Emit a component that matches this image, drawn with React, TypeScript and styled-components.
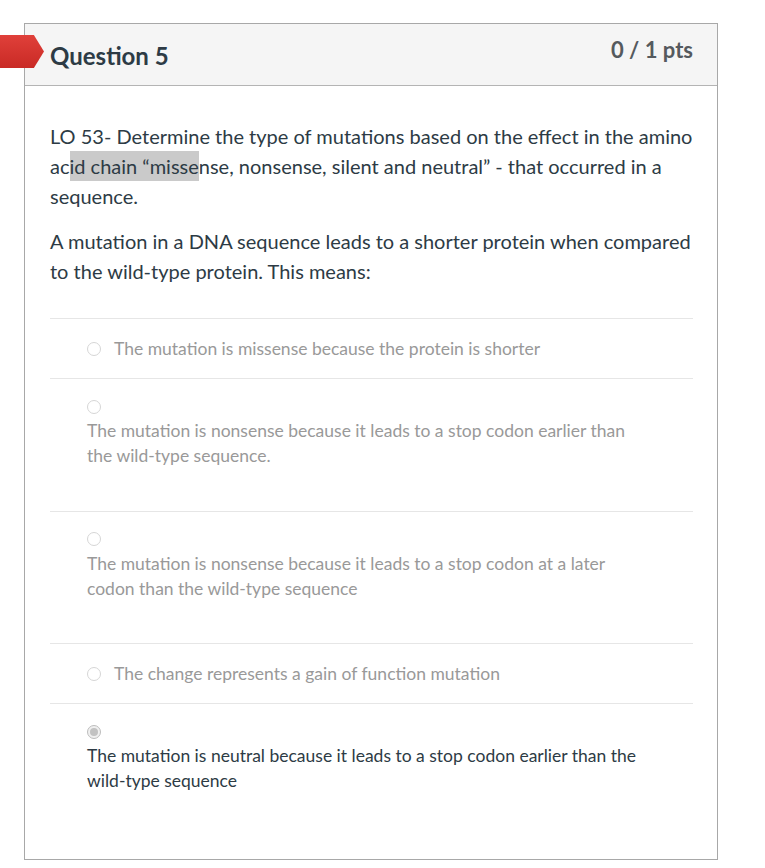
import React from "react";
import styled, {createGlobalStyle} from "styled-components";

const GlobalStyle = createGlobalStyle`
    html, body {
        margin: 0;
        padding: 0;
        background: #ffffff;
        font-family: Lato, "Open Sans", "Liberation Sans", sans-serif;
    }
`

type Answer = {
    text: string;
    wrapped?: boolean;
    selected?: boolean;
}

const answers: Answer[] = [
    {text: "The mutation is missense because the protein is shorter"},
    {text: "The mutation is nonsense because it leads to a stop codon earlier than the wild-type sequence.", wrapped: true},
    {text: "The mutation is nonsense because it leads to a stop codon at a later codon than the wild-type sequence", wrapped: true},
    {text: "The change represents a gain of function mutation"},
    {text: "The mutation is neutral because it leads to a stop codon earlier than the wild-type sequence", wrapped: true, selected: true},
]

function Radio({selected}: {selected?: boolean}) {
    return <RadioCircle $selected={selected}>{selected && <RadioDot/>}</RadioCircle>
}

export default function App() {
    return (
        <Page>
            <GlobalStyle/>
            <Card>
                <Header>
                    <Flag/>
                    <Title>Question 5</Title>
                    <Points>0 / 1 pts</Points>
                </Header>
                <Body>
                    <Paragraph>
                        LO 53- Determine the type of mutations based on the effect in the amino
                        ac<Highlight>id chain “misse</Highlight>nse, nonsense, silent and neutral” - that occurred in a
                        sequence.
                    </Paragraph>
                    <Paragraph>
                        A mutation in a DNA sequence leads to a shorter protein when compared
                        to the wild-type protein. This means:
                    </Paragraph>
                    <AnswerList>
                        {answers.map((a, i) => (
                            <AnswerRow key={i} $wrapped={a.wrapped}>
                                {a.wrapped ? (
                                    <>
                                        <RadioLine><Radio selected={a.selected}/></RadioLine>
                                        <AnswerText $selected={a.selected}>{a.text}</AnswerText>
                                    </>
                                ) : (
                                    <InlineAnswer>
                                        <Radio selected={a.selected}/>
                                        <AnswerText $selected={a.selected}>{a.text}</AnswerText>
                                    </InlineAnswer>
                                )}
                            </AnswerRow>
                        ))}
                    </AnswerList>
                </Body>
            </Card>
        </Page>
    )
}

const Page = styled.div`
    padding: 23px 0 7px 24px;
`

const Card = styled.div`
    width: 692px;
    border: 1px solid #a8a8a8;
    background: #ffffff;
`

const Header = styled.div`
    position: relative;
    display: flex;
    flex-direction: row;
    justify-content: space-between;
    align-items: flex-start;
    height: 62px;
    box-sizing: border-box;
    padding: 13px 24px 0 25px;
    background-color: #f5f5f5;
    border-bottom: 1px solid #b4b4b4;
`

const Flag = styled.div`
    position: absolute;
    left: -25px;
    top: 11px;
    width: 44px;
    height: 33px;
    background: linear-gradient(#e0403a, #c92a25);
    clip-path: polygon(0 0, 77% 0, 100% 50%, 77% 100%, 0 100%);
`

const Title = styled.div`
    margin-top: 5px;
    font-size: 24px;
    line-height: 1.2;
    font-weight: 700;
    color: #2d3b45;
`

const Points = styled.div`
    font-size: 22px;
    line-height: 1.2;
    font-weight: 700;
    color: #555a5e;
`

const Body = styled.div`
    padding: 35px 24px 24px 25px;
    color: #2d3b45;
`

const Paragraph = styled.p`
    margin: 0 0 15px;
    font-size: 20px;
    line-height: 30px;
`

const Highlight = styled.span`
    background-color: #cacaca;
    padding: 3px 0;
`

const AnswerList = styled.div`
    margin-top: 32px;
`

const AnswerRow = styled.div<{ $wrapped?: boolean }>`
    border-top: 1px solid #e6e6e6;
    padding: ${p => p.$wrapped ? "16px 45px 42.5px 37px" : "17px 45px 17px 37px"};
    
    &:last-child {
        padding-bottom: 42px;
    }
`

const InlineAnswer = styled.div`
    display: flex;
    flex-direction: row;
    align-items: center;
    gap: 13px;
    height: 25px;
`

const RadioLine = styled.div`
    display: flex;
    align-items: center;
    height: 23px;
`

const RadioCircle = styled.span<{ $selected?: boolean }>`
    display: inline-flex;
    align-items: center;
    justify-content: center;
    flex: none;
    width: 14px;
    height: 14px;
    box-sizing: border-box;
    border-radius: 50%;
    border: 1px solid ${p => p.$selected ? "#bdbdbd" : "#d6d6d6"};
    background: ${p => p.$selected ? "#f0f0f0" : "#ffffff"};
`

const RadioDot = styled.span`
    width: 8px;
    height: 8px;
    border-radius: 50%;
    background: #c2c2c2;
`

const AnswerText = styled.div<{ $selected?: boolean }>`
    font-size: 17.5px;
    line-height: 25px;
    color: ${p => p.$selected ? "#2d3b45" : "#999999"};
`
